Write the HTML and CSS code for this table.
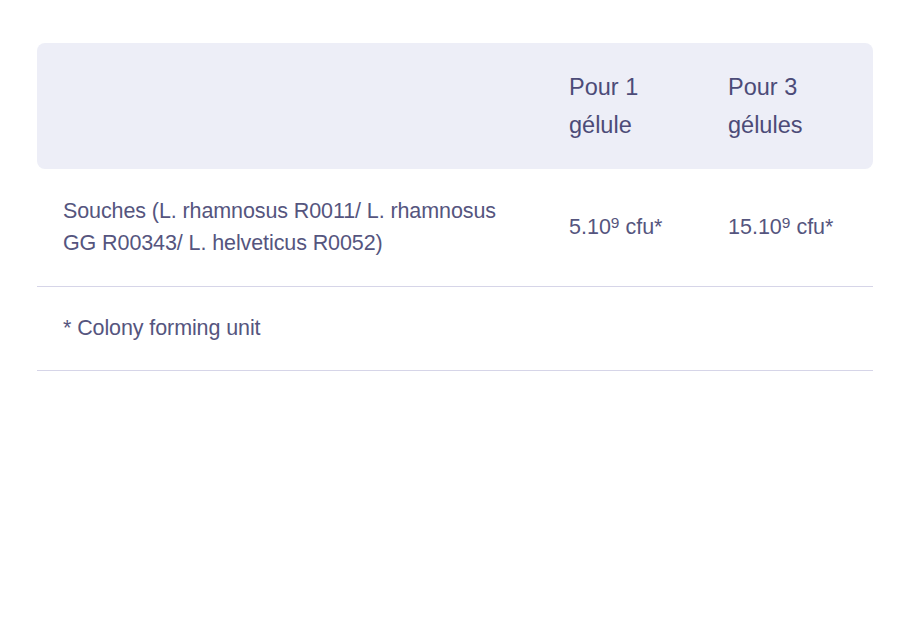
FILE: index.html
```html
<!DOCTYPE html>
<html lang="fr">
<head>
  <meta charset="UTF-8" />
  <meta name="viewport" content="width=device-width, initial-scale=1.0"/>
  <title>Composition</title>
  <link rel="stylesheet" href="styles.css">
</head>
<body>
  <table class="compo">
    <thead>
      <tr>
        <th class="label"></th>
        <th class="dose-1">Pour 1 gélule</th>
        <th class="dose-3">Pour 3 gélules</th>
      </tr>
    </thead>
    <tbody>
      <tr class="strain">
        <td class="label">Souches (L. rhamnosus R0011/ L. rhamnosus GG R00343/ L. helveticus R0052)</td>
        <td>5.10<sup>9</sup> cfu*</td>
        <td>15.10<sup>9</sup> cfu*</td>
      </tr>
      <tr class="note">
        <td class="label" colspan="3">* Colony forming unit</td>
      </tr>
    </tbody>
  </table>
</body>
</html>
```

FILE: styles.css
```css
body {
  margin: 0;
  padding: 43px 40px 0 37px;
  font-family: 'Liberation Sans', Arial, sans-serif;
  color: #4c4b78;
  background: #ffffff;
}

.compo {
  width: 836px;
  border-collapse: collapse;
  table-layout: fixed;
}

.compo th {
  background: #edeef7;
  font-weight: normal;
  font-size: 23.5px;
  line-height: 38px;
  text-align: left;
  vertical-align: top;
  padding: 25px 26px 25px 26px;
}

.compo th.label {
  width: 454px;
  border-radius: 8px 0 0 8px;
}

.compo th.dose-1 {
  width: 107px;
}

.compo th.dose-3 {
  border-radius: 0 8px 8px 0;
}

.compo td {
  font-size: 21.5px;
  line-height: 32px;
  padding: 25px 26px 26px 26px;
  border-bottom: 1px solid #d6d5e8;
  vertical-align: middle;
  color: #55557e;
}

.strain td {
  padding-top: 26px;
  padding-bottom: 27px;
}

.compo td.label {
  letter-spacing: -0.1px;
}

.compo sup {
  font-size: 0.72em;
  line-height: 0;
  vertical-align: 0.4em;
}
```
